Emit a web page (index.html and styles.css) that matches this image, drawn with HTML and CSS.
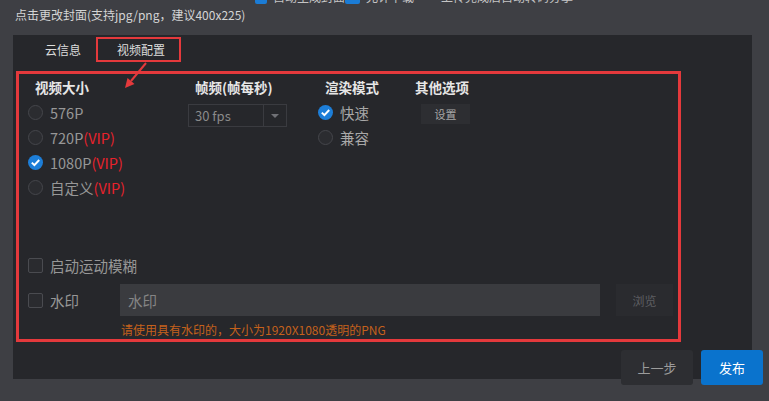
FILE: index.html
```html
<!DOCTYPE html>
<html lang="zh-CN">

<head>
    <meta charset="UTF-8">
    <meta name="viewport" content="width=device-width, initial-scale=1.0">
    <title>视频配置</title>
    <link rel="stylesheet" href="styles.css">
</head>

<body>
    <div class="top-checks">
        <div class="top-check"><span class="tick"></span>自动生成封面</div>
        <div class="top-check"><span class="tick"></span>允许下载</div>
        <div class="top-check"><span class="tick"></span>上传完成后自动转码分享</div>
    </div>

    <div class="cover-hint">点击更改封面(支持jpg/png，建议400x225)</div>

    <div class="panel">
        <div class="tabs">
            <div class="tab">云信息</div>
            <div class="tab active">视频配置</div>
        </div>

        <!-- annotation arrow -->
        <svg class="pointer" width="160" height="60" viewBox="0 0 160 60">
            <line x1="133" y1="28" x2="118" y2="46" stroke="#e4393c" stroke-width="2" />
            <polygon points="112,53 121.5,49 114.5,43" fill="#e4393c" />
        </svg>

        <div class="config">
            <div class="options">
                <div class="col col-size">
                    <div class="col-head">视频大小</div>
                    <div class="choice"><span class="radio"></span>576P</div>
                    <div class="choice"><span class="radio"></span>720P<span class="vip">(VIP)</span></div>
                    <div class="choice">
                        <span class="radio on">
                            <svg width="15" height="15" viewBox="0 0 15 15">
                                <path d="M3.8 7.6 L6.4 10.1 L11.2 5" fill="none" stroke="#fff" stroke-width="2" />
                            </svg>
                        </span>1080P<span class="vip">(VIP)</span>
                    </div>
                    <div class="choice"><span class="radio"></span>自定义<span class="vip">(VIP)</span></div>
                </div>

                <div class="col col-fps">
                    <div class="col-head">帧频(帧每秒)</div>
                    <div class="select">
                        <div class="select-value">30 fps</div>
                        <div class="select-arrow"><span class="caret"></span></div>
                    </div>
                </div>

                <div class="col col-render">
                    <div class="col-head">渲染模式</div>
                    <div class="choice light">
                        <span class="radio on">
                            <svg width="15" height="15" viewBox="0 0 15 15">
                                <path d="M3.8 7.6 L6.4 10.1 L11.2 5" fill="none" stroke="#fff" stroke-width="2" />
                            </svg>
                        </span>快速
                    </div>
                    <div class="choice light"><span class="radio"></span>兼容</div>
                </div>

                <div class="col col-other">
                    <div class="col-head">其他选项</div>
                    <button class="small-btn">设置</button>
                </div>
            </div>

            <div class="extras">
                <div class="check-row"><span class="checkbox"></span>启动运动模糊</div>
                <div class="mark-row">
                    <div class="mark-label"><span class="checkbox"></span>水印</div>
                    <input type="text" class="mark-input" placeholder="水印">
                    <button class="browse">浏览</button>
                </div>
                <div class="mark-hint">请使用具有水印的，大小为1920X1080透明的PNG</div>
            </div>
        </div>
    </div>

    <div class="actions">
        <button class="btn btn-prev">上一步</button>
        <button class="btn btn-publish">发布</button>
    </div>
</body>

</html>
```

FILE: styles.css
```css
* {
    margin: 0;
    padding: 0;
    box-sizing: border-box;
    font-family: "Noto Sans CJK SC", sans-serif;
}

body {
    background-color: #3e3f44;
    color: #ccc;
    width: 769px;
    height: 401px;
    overflow: hidden;
}

.top-checks {
    display: flex;
    margin-top: -11px;
    padding-left: 255px;
    height: 15px;
}

.top-check {
    display: flex;
    align-items: center;
    width: 90px;
    font-size: 12px;
    line-height: 15px;
    color: #c4c4c4;
    white-space: nowrap;
}

.top-check .tick {
    width: 15px;
    height: 15px;
    background: #1b7cd6;
    border-radius: 2px;
    margin-right: 6px;
}

.cover-hint {
    margin: 3px 0 0 15px;
    font-size: 12px;
    line-height: 16px;
    color: #d4d4d4;
}

.panel {
    position: relative;
    margin: 12px 0 0 13px;
    width: 739px;
    height: 344px;
    padding-top: 2px;
    background: #26272b;
}

.tabs {
    display: flex;
    height: 25px;
    padding-left: 14px;
    margin-bottom: 9px;
}

.tab {
    font-size: 12px;
    line-height: 21px;
    color: #dcdcdc;
    padding: 0 13px 0 16px;
    border: 2px solid transparent;
}

.tab.active {
    padding: 0 14px 0 19px;
    border-color: #e4393c;
}

.pointer {
    position: absolute;
    left: 0;
    top: 0;
    overflow: visible;
}

.config {
    margin-left: 3px;
    width: 665px;
    height: 271px;
    border: 3px solid #e4393c;
    display: flex;
    flex-direction: column;
    padding: 4px 0 1px 9px;
}

.options {
    display: flex;
}

.col-size {
    width: 160px;
}

.col-fps {
    width: 130px;
}

.col-render {
    width: 90px;
}

.col-head {
    font-size: 13.5px;
    font-weight: bold;
    line-height: 18px;
    color: #e6e6e6;
    padding-left: 7px;
    margin-bottom: 4px;
}

.choice {
    display: flex;
    align-items: center;
    height: 25px;
    font-size: 14.5px;
    color: #979797;
}

.choice.light {
    color: #a8a8a8;
}

.radio {
    width: 15px;
    height: 15px;
    border-radius: 50%;
    border: 1px solid #45464b;
    background: #2b2c30;
    margin-right: 7px;
    flex-shrink: 0;
}

.radio.on {
    border: none;
    background: #1d7ed8;
}

.radio svg {
    display: block;
}

.vip {
    color: #e8222b;
}

.select {
    display: flex;
    margin-top: 8px;
    width: 99px;
    height: 23px;
    border: 1px solid #3a3b40;
}

.select-value {
    flex: 1;
    font-size: 13px;
    line-height: 21px;
    color: #8a8a8a;
    padding-left: 6px;
}

.select-arrow {
    width: 23px;
    border-left: 1px solid #3a3b40;
    display: flex;
    align-items: center;
    justify-content: center;
}

.caret {
    border-left: 4px solid transparent;
    border-right: 4px solid transparent;
    border-top: 4px solid #707176;
}

.small-btn {
    display: block;
    margin: 8px 0 0 13px;
    width: 49px;
    height: 20px;
    background: #2d2e32;
    border: none;
    font-size: 11px;
    color: #a8a8a8;
}

.extras {
    margin-top: auto;
}

.check-row {
    display: flex;
    align-items: center;
    height: 24px;
    margin-bottom: 7px;
    font-size: 14.5px;
    color: #979797;
}

.checkbox {
    width: 15px;
    height: 15px;
    border: 1px solid #4a4b50;
    background: #2a2b2f;
    border-radius: 2px;
    margin-right: 7px;
}

.mark-row {
    display: flex;
    align-items: center;
    height: 32px;
}

.mark-label {
    display: flex;
    align-items: center;
    width: 92px;
    font-size: 14.5px;
    color: #979797;
}

.mark-input {
    width: 480px;
    height: 32px;
    background: #3a3b3f;
    border: none;
    outline: none;
    font-size: 14.5px;
    color: #888;
    padding-left: 8px;
}

.mark-input::placeholder {
    color: #858585;
}

.browse {
    margin-left: 16px;
    width: 57px;
    height: 32px;
    background: #2a2b2f;
    border: none;
    font-size: 12px;
    color: #5d5e62;
}

.mark-hint {
    margin: 6px 0 0 93px;
    font-size: 12px;
    line-height: 16px;
    color: #c4611c;
}

.actions {
    position: relative;
    display: flex;
    justify-content: flex-end;
    gap: 8px;
    margin-top: -29px;
    padding-right: 6px;
}

.btn {
    height: 35px;
    border: none;
    border-radius: 3px;
    font-size: 13px;
}

.btn-prev {
    width: 72px;
    background: #2d2e32;
    color: #9c9c9c;
}

.btn-publish {
    width: 62px;
    background: #0a73cd;
    color: #fff;
}
```
